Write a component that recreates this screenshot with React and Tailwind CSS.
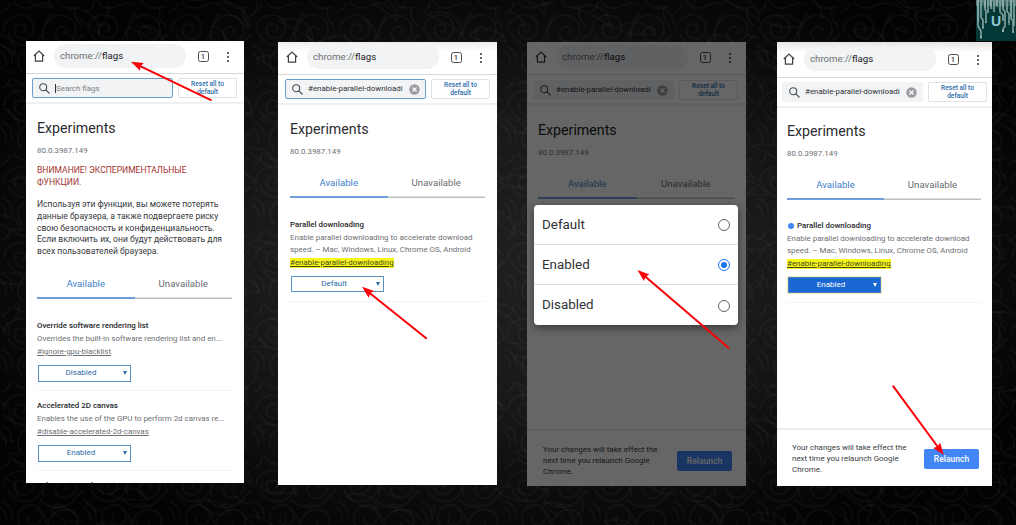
import clsx from 'clsx';

const warningLines = ['ВНИМАНИЕ! ЭКСПЕРИМЕНТАЛЬНЫЕ', 'ФУНКЦИИ.'];

const introLines = [
  'Используя эти функции, вы можете потерять',
  'данные браузера, а также подвергаете риску',
  'свою безопасность и конфиденциальность.',
  'Если включить их, они будут действовать для',
  'всех пользователей браузера.',
];

const parallelLines = [
  'Enable parallel downloading to accelerate download',
  'speed. – Mac, Windows, Linux, Chrome OS, Android',
];

const options = ['Default', 'Enabled', 'Disabled'];

const arrows = [
  { x1: 211.5, y1: 100.3, x2: 131, y2: 61.7 },
  { x1: 426.8, y1: 338.8, x2: 362, y2: 286.8 },
  { x1: 729, y1: 348.3, x2: 637.5, y2: 270 },
  { x1: 892.8, y1: 385.7, x2: 943.8, y2: 455 },
];

function Backdrop() {
  return (
    <svg className="absolute inset-0 h-full w-full" aria-hidden="true">
      <defs>
        <pattern id="damask" width="84" height="76" patternUnits="userSpaceOnUse">
          <g fill="none" stroke="#fff" strokeWidth="1.8" strokeLinecap="round">
            <path d="M4 30c0-14 18-20 27-10 7 9-1 21-11 18-8-3-7-14 1-14 5 0 6 6 2 8" />
            <path d="M8 34c4 12 22 16 31 5 6-8 5-18 12-25" />
            <path d="M44 40c-4-14 8-28 22-24 12 4 13 20 3 25-9 4-17-5-12-12 4-5 11-1 9 4" />
            <path d="M40 44c8 8 22 10 31 3 6-5 8-11 13-12" />
            <path d="M22 72c-8-8-4-22 8-23 11 0 16 13 8 19-6 4-13-2-9-8" />
            <path d="M48 74c-2-12 8-22 20-20 9 2 13 12 7 18-5 4-12 0-10-6" />
            <path d="M2 46c6 2 11 8 10 16M0 52c5 3 7 8 6 14M14 2c4 6 12 8 20 4 6-3 10-4 16-1M58 1c4 6 12 9 22 6" />
            <path d="M76 8c-2 8 0 14 6 18M38 54c5 2 8 6 8 12M2 12c4-1 8-5 8-10M53 50c4-3 9-2 13 0" />
          </g>
        </pattern>
        <pattern id="leaves" width="113" height="97" patternUnits="userSpaceOnUse" patternTransform="rotate(38)">
          <g fill="none" stroke="#fff" strokeWidth="1.8" strokeLinecap="round">
            <path d="M6 40c10-18 30-20 40-6-14-2-28 2-40 6M52 30c4-16 20-24 34-18-10 4-18 18-34 18" />
            <path d="M60 62c12-14 32-12 40 2-14-4-26 2-40-2M14 80c6-12 20-16 32-10-8 8-20 12-32 10" />
            <path d="M88 34c8 6 10 16 4 24M34 50c8 4 16 4 22-2M70 84c8-4 18-2 24 6" />
          </g>
        </pattern>
        <radialGradient id="glow" cx="50%" cy="50%" r="58%">
          <stop offset="0" stopColor="#1f1f1f" />
          <stop offset="0.45" stopColor="#191919" />
          <stop offset="1" stopColor="#030303" />
        </radialGradient>
      </defs>
      <rect width="100%" height="100%" fill="url(#glow)" />
      <rect width="100%" height="100%" fill="url(#damask)" opacity="0.035" />
      <rect width="100%" height="100%" fill="url(#leaves)" opacity="0.03" />
    </svg>
  );
}

function ChannelLogo() {
  return (
    <div className="absolute top-0 right-0 flex h-[41px] w-10 items-center justify-center overflow-hidden bg-[#033836]">
      <svg className="absolute inset-0" width="40" height="41" viewBox="0 0 40 41" fill="none" aria-hidden="true">
        <path d="M0 0h40v6H0z" fill="#557b78" />
        <g stroke="#7f9f9b" strokeWidth="1.7">
          <path d="M2 0v26l3 5v6M5 0v17l2 3v8M9 0v9l1 2v11M12 0v13M15 0v9M18 0v12M21 0v7M24 0v12l3 3v6M27 0v9l2 3v14l-2 3v2M31 0v11l2 3v9M35 0v18l2 3v10M38 0v26" />
        </g>
        <g stroke="#a9c2be" strokeWidth="0.7">
          <path d="M2 0v22M9 0v8M15 0v7M21 0v5M27 0v8M35 0v16" />
        </g>
        <g stroke="#16514e" strokeWidth="1">
          <path d="M3.5 2v18M7 3v13M10.500 0v7M16.500 2v7M22.500 3v5M29 1v8M33 2v7M36.500 3v14" />
        </g>
        <g fill="#b5d2cf">
          <circle cx="5" cy="37.500" r="1" />
          <circle cx="7" cy="28" r="0.800" />
          <circle cx="10" cy="22.500" r="0.800" />
          <circle cx="27" cy="31" r="1" />
          <circle cx="33" cy="24" r="0.800" />
          <circle cx="37" cy="32" r="0.900" />
        </g>
      </svg>
      <span className="relative font-['Liberation_Sans'] text-[14px] leading-none font-bold text-[#8fc9d2]">U</span>
    </div>
  );
}

function Toolbar({ className }) {
  return (
    <div className={clsx('flex shrink-0 items-start border-b border-[#d9d9db]', className)}>
      <svg className="mt-[6px] h-3 w-3 shrink-0" viewBox="0 0 12 12" fill="none" stroke="#3c4043" strokeWidth="1.200" aria-hidden="true">
        <path d="M.8 6 6 1l5.200 5M2.400 5v6.200h7.200V5" />
      </svg>
      <div className="ml-[9px] flex h-6 w-[132px] shrink-0 items-center rounded-full bg-[#f1f3f4] pl-[6px] text-[9.700px] text-[#6b6e72]">
        chrome://<span className="text-[#202124]">flags</span>
      </div>
      <div className="mt-[7px] ml-[11.500px] flex h-[11px] w-[11px] shrink-0 items-center justify-center rounded-[2.500px] border border-[#4a4d51] text-[7.500px] leading-none font-medium text-[#3c4043]">
        1
      </div>
      <div className="mt-2 ml-[18px] flex h-[10px] shrink-0 flex-col justify-between">
        <span className="h-[2px] w-[2px] rounded-full bg-[#303236]" />
        <span className="h-[2px] w-[2px] rounded-full bg-[#303236]" />
        <span className="h-[2px] w-[2px] rounded-full bg-[#303236]" />
      </div>
    </div>
  );
}

function SearchBar({ query, focused, className }) {
  return (
    <div className={clsx('flex shrink-0 items-start gap-[5px] border-b-2 border-[#eff0f1]', className)}>
      <div
        className={clsx(
          'flex h-5 w-[141px] shrink-0 items-center rounded-[2px] border bg-[#f1f3f4] pl-[6px]',
          focused ? 'border-[#6d9fce]' : 'border-[#f1f3f4]'
        )}
      >
        <svg className="h-[11px] w-[11px] shrink-0" viewBox="0 0 11 11" fill="none" stroke="#4a4d51" strokeWidth="1.100" aria-hidden="true">
          <circle cx="4.200" cy="4.200" r="3.500" />
          <path d="m6.700 6.700 3.800 3.800" />
        </svg>
        {query ? (
          <>
            <span className="ml-[5px] w-[96px] shrink-0 text-[7.930px] whitespace-nowrap text-[#303236]">{query}</span>
            <svg className="ml-[5px] h-[11px] w-[11px] shrink-0" viewBox="0 0 11 11" aria-hidden="true">
              <circle cx="5.500" cy="5.500" r="5.200" fill="#9b9da0" />
              <path d="m3.500 3.500 4 4m0-4-4 4" stroke="#fff" strokeWidth="1.100" />
            </svg>
          </>
        ) : (
          <span className="ml-[5px] border-l border-[#303236] text-[7.930px] leading-[9px] text-[#7f8286]">Search flags</span>
        )}
      </div>
      <button className="flex h-5 w-[59px] shrink-0 flex-col items-center justify-center rounded-[2px] border border-[#e0e2e5] text-[6.600px] leading-[8px] font-medium text-[#2c6cab]">
        <span>Reset all to</span>
        <span>default</span>
      </button>
    </div>
  );
}

function Tabs({ className }) {
  return (
    <div className={clsx('flex text-center text-[9.650px] leading-3', className)}>
      <div className="flex-1 border-b-2 border-[#6f9fd8] pb-[7px] text-[#3f7fcb]">Available</div>
      <div className="flex-1 pb-[7px] text-[#6a6d71] shadow-[inset_0_-1.500px_0_#bdbfc2]">Unavailable</div>
    </div>
  );
}

function FlagSelect({ value, changed, className }) {
  return (
    <div
      className={clsx(
        'ml-px flex w-[93px] items-center border text-[8px]',
        changed ? 'border-[#4a7fc0] bg-[#1967d2] text-white outline outline-[#f3e9bd]' : 'border-[#5b8fbd] text-[#2d6ca5]',
        className
      )}
    >
      <span className="flex-1 text-center">{value}</span>
      <svg className="mr-[3px] h-1 w-1" viewBox="0 0 4 4" fill="currentColor" aria-hidden="true">
        <path d="M0 0h4L2 4z" />
      </svg>
    </div>
  );
}

function Flag({ title, lines, link, value, highlighted, changed, className }) {
  return (
    <div className={clsx('border-b border-[#f2f2f2]', className)}>
      <h3 className="flex items-center text-[7.930px] leading-[14px] font-medium whitespace-nowrap text-[#27282b]">
        {changed && <span className="mr-[3px] ml-px h-[6px] w-[6px] rounded-full bg-[#4285f4]" />}
        {title}
      </h3>
      {lines.map((line) => (
        <p key={line} className="text-[7.930px] leading-3 whitespace-nowrap text-[#6c6f73]">
          {line}
        </p>
      ))}
      <p className="mt-[2px] flex text-[7.930px] leading-[10px] whitespace-nowrap">
        <a className={clsx('underline', highlighted ? 'bg-[#f7f71c] text-[#44481c]' : 'text-[#6c6f73]')}>{link}</a>
      </p>
      <FlagSelect value={value} changed={changed} className={highlighted ? 'mt-2 h-4' : 'mt-2 h-[17px]'} />
    </div>
  );
}

function RelaunchBar({ className }) {
  return (
    <div className={clsx('absolute inset-x-0 bottom-0 flex items-start border-t-2 border-[#ececee]', className)}>
      <p className="w-[132px] shrink-0 text-[7.950px] leading-[11px] whitespace-nowrap text-[#3c4043]">
        Your changes will take effect the
        <br />
        next time you relaunch Google
        <br />
        Chrome.
      </p>
      <button className="mt-[7px] h-5 w-[55px] shrink-0 rounded-[2px] bg-[#4285f4] text-[8.500px] font-medium text-white">
        Relaunch
      </button>
    </div>
  );
}

function ChoiceDialog({ selected }) {
  return (
    <div className="absolute top-[163px] left-[7px] h-[120px] w-[204px] divide-y divide-[#dedede] rounded-[4px] bg-white shadow-[0_3px_8px_rgba(0,0,0,0.450)]">
      {options.map((option) => (
        <div key={option} className="flex h-10 items-center justify-between pt-px pr-2 pl-2 text-[13.400px] text-[#303134]">
          {option}
          <span
            className={clsx(
              'flex h-3 w-3 items-center justify-center rounded-full border-[1.500px]',
              option === selected ? 'border-[#1a73e8]' : 'border-[#5f6368]'
            )}
          >
            {option === selected && <span className="h-[6px] w-[6px] rounded-full bg-[#1a73e8]" />}
          </span>
        </div>
      ))}
    </div>
  );
}

function Arrows() {
  return (
    <svg className="pointer-events-none absolute inset-0 h-full w-full" aria-hidden="true">
      {arrows.map(({ x1, y1, x2, y2 }) => {
        const angle = (Math.atan2(y2 - y1, x2 - x1) * 180) / Math.PI;
        const length = Math.hypot(x2 - x1, y2 - y1);
        return (
          <g key={x1} transform={`translate(${x2} ${y2}) rotate(${angle})`} fill="#fb0007">
            <rect x={-length} y="-1" width={length - 9} height="2" />
            <path d="M0 0-12-4.300-10.500 0-12 4.300z" />
          </g>
        );
      })}
    </svg>
  );
}

export default function App() {
  return (
    <div className="relative h-[525px] w-[1016px] overflow-hidden bg-black font-[Roboto,sans-serif]">
      <Backdrop />
      <ChannelLogo />

      <div className="relative flex items-start pt-[41px] pl-[26px]">
        {/* Step 1: open chrome://flags */}
        <section className="h-[442px] w-[218px] shrink-0 overflow-hidden bg-white">
          <Toolbar className="h-[33px] pt-[3px] pl-[7px]" />
          <SearchBar focused className="h-[30px] pt-1 pl-[6px]" />
          <div className="pr-3 pl-[11px]">
            <h2 className="mt-[14px] text-[14.200px] leading-5 text-[#2c2d30]">Experiments</h2>
            <p className="mt-[7px] text-[7.900px] leading-3 text-[#6c6f73]">80.0.3987.149</p>
            <div className="mt-[7px] text-[8.550px] leading-[12px] whitespace-nowrap text-[#a3332f]">
              {warningLines.map((line) => (
                <p key={line}>{line}</p>
              ))}
            </div>
            <div className="mt-[11px] text-[8.550px] leading-[11.750px] whitespace-nowrap text-[#36383b]">
              {introLines.map((line) => (
                <p key={line}>{line}</p>
              ))}
            </div>
            <Tabs className="mt-5" />
            <Flag
              className="mt-5 pb-2"
              title="Override software rendering list"
              lines={['Overrides the built-in software rendering list and en...']}
              link="#ignore-gpu-blacklist"
              value="Disabled"
            />
            <Flag
              className="mt-[8px] pb-2"
              title="Accelerated 2D canvas"
              lines={['Enables the use of the GPU to perform 2d canvas re...']}
              link="#disable-accelerated-2d-canvas"
              value="Enabled"
            />
            <h3 className="mt-[8px] text-[7.930px] leading-[14px] font-medium whitespace-nowrap text-[#27282b]">
              Select HW overlay strategies
            </h3>
          </div>
        </section>

        {/* Step 2: find the flag */}
        <section className="mt-px ml-[34px] h-[443px] w-[219px] shrink-0 overflow-hidden bg-white">
          <Toolbar className="h-[33px] bg-linear-to-b from-[#ededed] to-white to-30% pt-[3px] pl-2" />
          <SearchBar query="#enable-parallel-downloadi" focused className="h-[30px] pt-1 pl-[7px]" />
          <div className="px-3">
            <h2 className="mt-[14px] text-[14.200px] leading-5 text-[#2c2d30]">Experiments</h2>
            <p className="mt-[7px] text-[7.900px] leading-3 text-[#6c6f73]">80.0.3987.149</p>
            <Tabs className="mt-[19px]" />
            <Flag
              className="mt-5 pb-[9px]"
              title="Parallel downloading"
              lines={parallelLines}
              link="#enable-parallel-downloading"
              value="Default"
              highlighted
            />
          </div>
        </section>

        {/* Step 3: choose a value */}
        <section className="relative mt-px ml-[30px] h-[444px] w-[219px] shrink-0 overflow-hidden bg-white">
          <Toolbar className="h-[33px] pt-[3px] pl-2" />
          <SearchBar query="#enable-parallel-downloadi" className="h-[30px] pt-[5px] pl-[6px]" />
          <div className="pr-[11px] pl-[11px]">
            <h2 className="mt-[15px] text-[14.200px] leading-5 text-[#202124]">Experiments</h2>
            <p className="mt-[7px] text-[7.900px] leading-3 text-[#6c6f73]">80.0.3987.149</p>
            <Tabs className="mt-[19px]" />
          </div>
          <RelaunchBar className="h-[57px] gap-[2px] pt-[13px] pl-4" />
          <div className="absolute inset-0 bg-black/60" />
          <ChoiceDialog selected="Enabled" />
        </section>

        {/* Step 4: restart the browser */}
        <section className="relative mt-px ml-[31px] h-[444px] w-[215px] shrink-0 overflow-hidden bg-white">
          <Toolbar className="h-9 bg-linear-to-b from-[#e4e4e4] to-white to-30% pt-[5px] pl-[6px]" />
          <SearchBar query="#enable-parallel-downloadi" className="h-[30px] pt-1 pl-[5px]" />
          <div className="pr-[11px] pl-[10px]">
            <h2 className="mt-[13px] text-[14.200px] leading-5 text-[#2c2d30]">Experiments</h2>
            <p className="mt-[7px] text-[7.900px] leading-3 text-[#6c6f73]">80.0.3987.149</p>
            <Tabs className="mt-[19px]" />
            <Flag
              className="mt-[19px] pb-[9px]"
              title="Parallel downloading"
              lines={parallelLines}
              link="#enable-parallel-downloading"
              value="Enabled"
              highlighted
              changed
            />
          </div>
          <RelaunchBar className="h-[58px] pt-[12px] pl-[15px]" />
        </section>
      </div>

      <Arrows />
    </div>
  );
}
